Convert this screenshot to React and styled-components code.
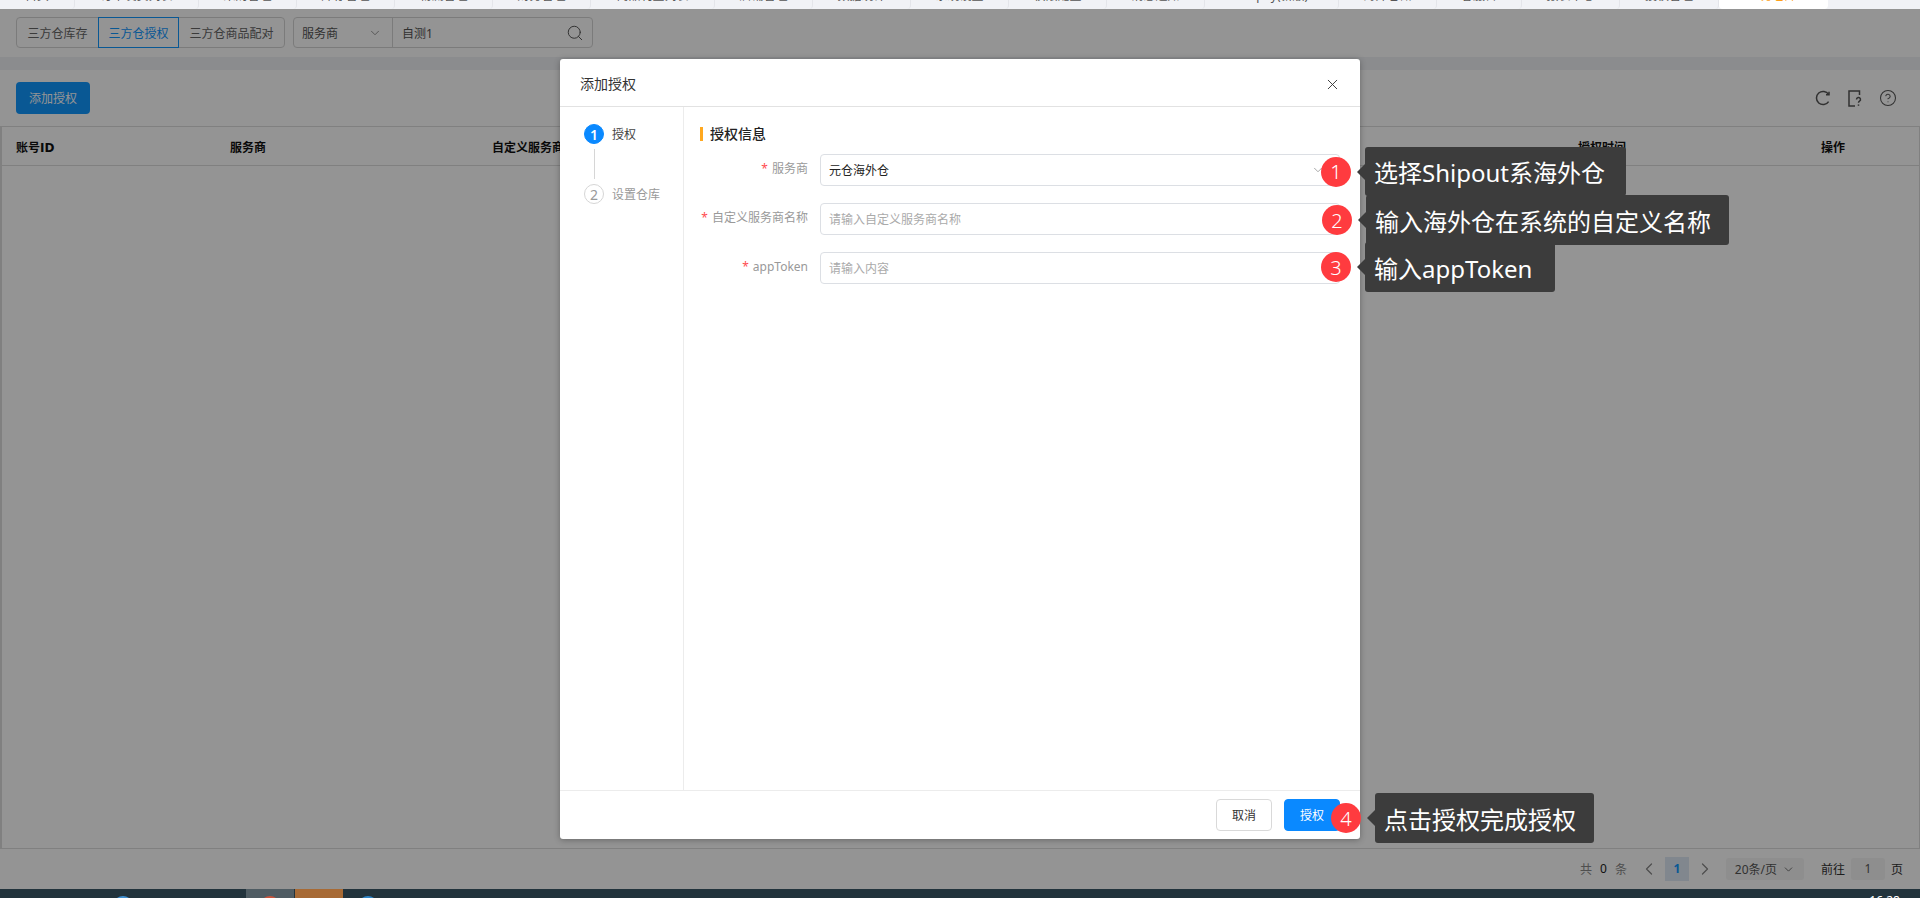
import React from "react";
import styled, { createGlobalStyle } from "styled-components";
import { ChevronDown, ChevronLeft, ChevronRight, CircleHelp, Search, X } from "lucide-react";

const GlobalStyle = createGlobalStyle`
    html, body {
        margin: 0;
        padding: 0;
        height: 100%;
        overflow: hidden;
    }
    body {
        font-family: "Noto Sans", "Noto Sans CJK SC", sans-serif;
        font-size: 12px;
        color: #333;
    }
    * {
        box-sizing: border-box;
    }
`;

const tabs = [
    { label: "首页", w: 75 },
    { label: "订单发货列表", w: 124 },
    { label: "采购管理", w: 98 },
    { label: "库存管理", w: 98 },
    { label: "物流管理", w: 98 },
    { label: "财务管理", w: 98 },
    { label: "商品刊登列表", w: 124 },
    { label: "店铺管理", w: 98 },
    { label: "数据统计", w: 98 },
    { label: "系统设置", w: 98 },
    { label: "权限配置", w: 98 },
    { label: "消息通知", w: 98 },
    { label: "Shopify(新版)", w: 134 },
    { label: "海外仓储", w: 98 },
    { label: "客服台", w: 85 },
    { label: "报表中心", w: 98 },
    { label: "授权管理", w: 99 },
    { label: "三方仓库", w: 109, active: true },
];

const steps = [
    { no: 1, label: "授权", active: true },
    { no: 2, label: "设置仓库" },
];

const notes = [
    { no: 1, text: "选择Shipout系海外仓", x: 1321, y: 147, h: 49, w: 261 },
    { no: 3, text: "输入appToken", x: 1321, y: 242, h: 50, w: 190 },
    { no: 2, text: "输入海外仓在系统的自定义名称", x: 1322, y: 195, h: 50, w: 363 },
    { no: 4, text: "点击授权完成授权", x: 1331, y: 793, h: 50, w: 219 },
];

const App = () => {
    return (
        <Root>
            <GlobalStyle />
            <TabStrip>
                {tabs.map((tab) => (
                    <Tab key={tab.label} $w={tab.w} $active={tab.active}>
                        {tab.label}
                    </Tab>
                ))}
            </TabStrip>

            <Page>
                <Toolbar>
                    <ButtonGroup>
                        <GroupButton>三方仓库存</GroupButton>
                        <GroupButton $active>三方仓授权</GroupButton>
                        <GroupButton>三方仓商品配对</GroupButton>
                    </ButtonGroup>
                    <SearchBox>
                        <SearchSelect>
                            服务商
                            <ChevronDown size={14} strokeWidth={1.5} color="#888" />
                        </SearchSelect>
                        <SearchInput>
                            自测1
                            <Search size={18} strokeWidth={1.3} color="#555" />
                        </SearchInput>
                    </SearchBox>
                </Toolbar>
                <Band />
                <Content>
                    <ActionBar>
                        <PrimaryButton>添加授权</PrimaryButton>
                        <ActionIcons>
                            <svg width="16" height="16" viewBox="0 0 16 16" fill="none" stroke="#555" strokeWidth="1.5">
                                <path d="M13.6 4.4A6.6 6.6 0 1 0 13.6 11.6" />
                                <path d="M14 1.8V4.8H11" />
                            </svg>
                            <svg width="14" height="17" viewBox="0 0 14 17" fill="none" stroke="#555" strokeWidth="1.5">
                                <path d="M11.5 5V1H1V16H7" />
                                <path d="M8.5 9.5a2 2 0 1 1 3 1.7c-.7.5-1 .8-1 1.6" />
                                <path d="M10.5 14.4v1.4" />
                            </svg>
                            <CircleHelp size={18} strokeWidth={1.4} color="#555" />
                        </ActionIcons>
                    </ActionBar>
                    <Table>
                        <TableHead>
                            <span>账号ID</span>
                            <span>服务商</span>
                            <span>自定义服务商名称</span>
                            <span>授权时间</span>
                            <span>操作</span>
                        </TableHead>
                    </Table>
                    <Pagination>
                        <PageTotal>
                            共<b>0</b>条
                        </PageTotal>
                        <PageArrow>
                            <ChevronLeft size={20} strokeWidth={1.5} />
                        </PageArrow>
                        <PageNumber>1</PageNumber>
                        <PageArrow>
                            <ChevronRight size={20} strokeWidth={1.5} />
                        </PageArrow>
                        <PageSize>
                            20条/页
                            <ChevronDown size={13} strokeWidth={1.5} />
                        </PageSize>
                        <PageJump>
                            前往
                            <JumpInput>1</JumpInput>页
                        </PageJump>
                    </Pagination>
                </Content>

                <Overlay>
                    <Modal>
                        <ModalHeader>
                            添加授权
                            <CloseIcon size={17} strokeWidth={1.3} color="#333" />
                        </ModalHeader>
                        <ModalBody>
                            <StepRail>
                                {steps.map((step, i) => (
                                    <React.Fragment key={step.no}>
                                        {i > 0 && <StepLine />}
                                        <Step $active={step.active}>
                                            <StepDot $active={step.active}>{step.no}</StepDot>
                                            {step.label}
                                        </Step>
                                    </React.Fragment>
                                ))}
                            </StepRail>
                            <FormPane>
                                <SectionTitle>授权信息</SectionTitle>
                                <FormRow>
                                    <FormLabel>服务商</FormLabel>
                                    <Field>
                                        元仓海外仓
                                        <ChevronDown size={14} strokeWidth={1.5} color="#999" />
                                    </Field>
                                </FormRow>
                                <FormRow>
                                    <FormLabel>自定义服务商名称</FormLabel>
                                    <Field $placeholder>请输入自定义服务商名称</Field>
                                </FormRow>
                                <FormRow>
                                    <FormLabel>appToken</FormLabel>
                                    <Field $placeholder>请输入内容</Field>
                                </FormRow>
                            </FormPane>
                        </ModalBody>
                        <ModalFooter>
                            <CancelButton>取消</CancelButton>
                            <SubmitButton>授权</SubmitButton>
                        </ModalFooter>
                    </Modal>
                </Overlay>
            </Page>

            <Taskbar>
                <TaskSlot />
                <TaskSlot />
                <TaskSlot>
                    <TaskIcon $color="#3f8fd0" />
                </TaskSlot>
                <TaskSlot />
                <TaskSlot />
                <TaskSlot $bg="#4f5c63">
                    <TaskIcon $color="#c9543c" />
                </TaskSlot>
                <TaskSlot $bg="#a76a35" />
                <TaskSlot>
                    <TaskIcon $color="#2f86c8" />
                </TaskSlot>
                <Clock>16:28</Clock>
            </Taskbar>

            {notes.map((note) => (
                <Note key={note.no} $x={note.x} $y={note.y} $h={note.h}>
                    <NoteBadge>{note.no}</NoteBadge>
                    <NoteBubble $w={note.w}>{note.text}</NoteBubble>
                </Note>
            ))}
        </Root>
    );
};

export default App;

const Root = styled.div`
    position: relative;
    display: flex;
    flex-direction: column;
    width: 1920px;
    height: 898px;
    overflow: hidden;
    background: #fff;
`;

const TabStrip = styled.div`
    display: flex;
    flex: 0 0 9px;
    background: #f1f2f6;
    overflow: hidden;
`;

// the top of the browser crop cuts the labels, only their feet show
const Tab = styled.div`
    flex: none;
    width: ${(p) => p.$w}px;
    height: 21px;
    margin-top: -12px;
    line-height: 16px;
    text-align: center;
    white-space: nowrap;
    color: ${(p) => (p.$active ? "#ff9f1a" : "#555")};
    border-right: 1px solid ${(p) => (p.$active ? "transparent" : "#e4e5ea")};
    border-radius: 0 0 4px 4px;
    background: ${(p) => (p.$active ? "#fff" : "transparent")};
`;

const Page = styled.div`
    position: relative;
    display: flex;
    flex-direction: column;
    flex: 1;
    min-height: 0;
    background: #fff;
`;

const Toolbar = styled.div`
    display: flex;
    flex: 0 0 48px;
    gap: 8px;
    padding: 8px 16px 9px;
`;

const ButtonGroup = styled.div`
    display: flex;
    border: 1px solid #d5d5d5;
    border-radius: 4px;
`;

const GroupButton = styled.div`
    display: flex;
    align-items: center;
    margin: -1px 0;
    padding: 0 9.5px;
    border: 1px solid ${(p) => (p.$active ? "#1098ff" : "transparent")};
    color: ${(p) => (p.$active ? "#1098ff" : "#666")};
`;

const SearchBox = styled.div`
    display: flex;
    width: 300px;
    border: 1px solid #d5d5d5;
    border-radius: 4px;
    color: #555;
`;

const SearchSelect = styled.div`
    display: flex;
    align-items: center;
    justify-content: space-between;
    width: 99px;
    padding: 0 10px 0 8px;
    border-right: 1px solid #d5d5d5;
`;

const SearchInput = styled.div`
    display: flex;
    flex: 1;
    align-items: center;
    justify-content: space-between;
    padding: 0 8px 0 9px;
`;

const Band = styled.div`
    flex: 0 0 13px;
    background: #f0f1f5;
`;

const Content = styled.div`
    display: flex;
    flex-direction: column;
    flex: 1;
    min-height: 0;
`;

const ActionBar = styled.div`
    display: flex;
    flex: 0 0 56px;
    align-items: center;
    justify-content: space-between;
    padding: 0 23px 0 16px;
`;

const ActionIcons = styled.div`
    display: flex;
    align-items: center;
    gap: 17px;
`;

const PrimaryButton = styled.div`
    display: flex;
    align-items: center;
    justify-content: center;
    width: 74px;
    height: 32px;
    border-radius: 4px;
    background: #1098ff;
    color: #fff;
`;

const Table = styled.div`
    flex: 1;
    border: 1px solid #dcdcdc;
    border-left-width: 2px;
`;

const TableHead = styled.div`
    display: grid;
    grid-template-columns: 214px 262px 1086px 243px 1fr;
    align-items: center;
    height: 39px;
    padding-left: 14px;
    border-bottom: 1px solid #dcdcdc;
    font-family: "DejaVu Sans", "Noto Sans CJK SC", sans-serif;
    font-weight: 700;
    color: #111;
`;

const Pagination = styled.div`
    display: flex;
    flex: 0 0 40px;
    align-items: center;
    justify-content: flex-end;
    padding-right: 17px;
    color: #888;
`;

const PageTotal = styled.div`
    display: flex;
    gap: 8px;
    margin-right: 6px;

    b {
        font-weight: 400;
        color: #222;
    }
`;

const PageArrow = styled.div`
    display: flex;
    justify-content: center;
    width: 32px;
    color: #888;
`;

const PageNumber = styled.div`
    width: 24px;
    height: 24px;
    line-height: 24px;
    text-align: center;
    font-weight: 700;
    color: #1098ff;
    background: #dfe9f5;
`;

const PageSize = styled.div`
    display: flex;
    align-items: center;
    justify-content: center;
    gap: 5px;
    width: 78px;
    height: 22px;
    margin-left: 5px;
    border-radius: 3px;
    background: #f5f5f5;
    color: #555;
`;

const PageJump = styled.div`
    display: flex;
    align-items: center;
    gap: 6px;
    margin-left: 17px;
    color: #333;
`;

const JumpInput = styled.div`
    width: 34px;
    height: 22px;
    line-height: 22px;
    text-align: center;
    border-radius: 3px;
    background: #f5f5f5;
    color: #555;
`;

const Overlay = styled.div`
    position: absolute;
    inset: 0;
    display: flex;
    justify-content: center;
    padding-top: 50px;
    background: rgba(0, 0, 0, 0.42);
`;

const Modal = styled.div`
    display: flex;
    flex-direction: column;
    width: 800px;
    height: 780px;
    border-radius: 3px;
    background: #fff;
    box-shadow: 0 1px 6px rgba(0, 0, 0, 0.3);
`;

const ModalHeader = styled.div`
    display: flex;
    flex: 0 0 48px;
    align-items: center;
    justify-content: space-between;
    padding: 0 19px 0 20px;
    border-bottom: 1px solid #e2e2e2;
    font-size: 14px;
    color: #333;
`;

const CloseIcon = styled(X)`
    margin-top: 4px;
`;

const ModalBody = styled.div`
    display: flex;
    flex: 1;
    min-height: 0;
`;

const StepRail = styled.div`
    display: flex;
    flex-direction: column;
    flex: 0 0 124px;
    padding: 17px 0 0 24px;
    border-right: 1px solid #ececec;
`;

const Step = styled.div`
    display: flex;
    align-items: center;
    gap: 8px;
    height: 20px;
    color: ${(p) => (p.$active ? "#444" : "#999")};
`;

const StepDot = styled.div`
    display: flex;
    align-items: center;
    justify-content: center;
    width: 20px;
    height: 20px;
    border-radius: 50%;
    border: 1px solid ${(p) => (p.$active ? "#0a89ff" : "#d6d6d6")};
    background: ${(p) => (p.$active ? "#0a89ff" : "#fff")};
    color: ${(p) => (p.$active ? "#fff" : "#999")};
    font-size: 14px;
    font-weight: ${(p) => (p.$active ? 600 : 400)};
`;

const StepLine = styled.div`
    width: 1px;
    height: 30px;
    margin: 5px 0 5px 9.5px;
    background: #d6d6d6;
`;

const FormPane = styled.div`
    display: flex;
    flex-direction: column;
    flex: 1;
    padding: 17px 20px 0 16px;
`;

const SectionTitle = styled.div`
    display: flex;
    align-items: center;
    height: 14px;
    margin: 3px 0 13px;
    padding-left: 7px;
    border-left: 3px solid #ffa81f;
    font-size: 14px;
    font-weight: 500;
    line-height: 14px;
    color: #222;
`;

const FormRow = styled.div`
    display: flex;
    gap: 12px;
    margin-bottom: 17px;
`;

const FormLabel = styled.div`
    display: flex;
    justify-content: flex-end;
    flex: 0 0 108px;
    height: 32px;
    line-height: 30px;
    white-space: nowrap;
    color: #999;

    &::before {
        content: "*";
        margin-right: 4px;
        color: #ff4d4f;
    }
`;

const Field = styled.div`
    display: flex;
    flex: 1;
    align-items: center;
    justify-content: space-between;
    height: 32px;
    padding: 0 14px 0 8px;
    border: 1px solid #dcdfe4;
    border-radius: 4px;
    color: ${(p) => (p.$placeholder ? "#aaa" : "#222")};
`;

const ModalFooter = styled.div`
    display: flex;
    flex: 0 0 49px;
    justify-content: flex-end;
    gap: 12px;
    padding: 8px 20px;
    border-top: 1px solid #ececec;
`;

const CancelButton = styled.div`
    display: flex;
    align-items: center;
    justify-content: center;
    width: 56px;
    height: 32px;
    border: 1px solid #d9d9d9;
    border-radius: 4px;
    color: #333;
`;

const SubmitButton = styled(CancelButton)`
    border-color: #0a89ff;
    background: #0a89ff;
    color: #fff;
`;

const Taskbar = styled.div`
    display: flex;
    flex: 0 0 9px;
    padding-left: 1px;
    overflow: hidden;
    background: #22333c;
`;

const TaskSlot = styled.div`
    display: flex;
    justify-content: center;
    flex: 0 0 49px;
    border-right: 1px solid #22333c;
    background: ${(p) => p.$bg || "transparent"};
`;

const TaskIcon = styled.div`
    flex: none;
    width: 20px;
    height: 20px;
    margin-top: 7px;
    border-radius: 50%;
    background: ${(p) => p.$color};
`;

const Clock = styled.div`
    margin-left: auto;
    padding: 4px 20px 0 0;
    line-height: 16px;
    color: #fff;
`;

const Note = styled.div`
    position: absolute;
    left: ${(p) => p.$x}px;
    top: ${(p) => p.$y}px;
    display: flex;
    align-items: center;
    height: ${(p) => p.$h}px;
`;

const NoteBadge = styled.div`
    display: flex;
    align-items: center;
    justify-content: center;
    width: 30px;
    height: 30px;
    margin-right: 14px;
    border-radius: 50%;
    background: #ff3b3f;
    color: #fff;
    font-size: 20px;
    font-weight: 300;
`;

const NoteBubble = styled.div`
    position: relative;
    display: flex;
    align-items: center;
    width: ${(p) => p.$w}px;
    height: 100%;
    padding-left: 9px;
    border-radius: 3px;
    background: #3c3c3c;
    color: #fff;
    font-size: 24px;
    white-space: nowrap;

    &::before {
        content: "";
        position: absolute;
        left: -8px;
        top: 50%;
        margin-top: -8px;
        border-style: solid;
        border-width: 8px 8px 8px 0;
        border-color: transparent #3c3c3c transparent transparent;
    }
`;
